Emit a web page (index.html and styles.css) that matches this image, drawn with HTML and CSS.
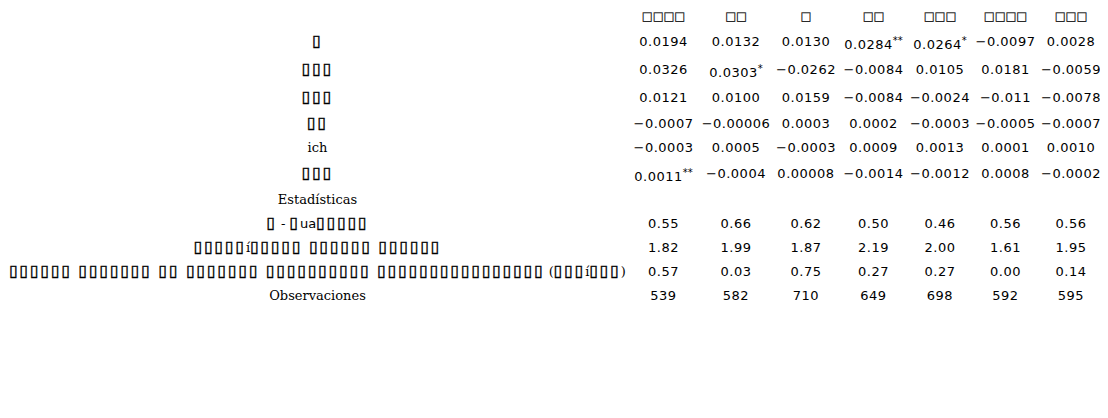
FILE: index.html
```html
<!DOCTYPE html>
<html>
<head>
<meta charset="utf-8">
<link rel="stylesheet" href="styles.css">
</head>
<body>
<table class="results">
  <colgroup>
    <col class="c-label">
    <col class="c1"><col class="c2"><col class="c3"><col class="c4"><col class="c5"><col class="c6"><col class="c7">
  </colgroup>
  <thead>
    <tr class="head">
      <th></th>
      <th>□□□□</th><th>□□</th><th>□</th><th>□□</th><th>□□□</th><th>□□□□</th><th>□□□</th>
    </tr>
  </thead>
  <tbody>
    <tr class="tall">
      <td class="label"><span class="box">▯</span></td>
      <td>0.0194</td><td>0.0132</td><td>0.0130</td><td class="sig">0.0284<sup>**</sup></td><td class="sig">0.0264<sup>*</sup></td><td>−0.0097</td><td>0.0028</td>
    </tr>
    <tr class="tall">
      <td class="label"><span class="box">▯▯▯</span></td>
      <td>0.0326</td><td class="sig">0.0303<sup>*</sup></td><td>−0.0262</td><td>−0.0084</td><td>0.0105</td><td>0.0181</td><td>−0.0059</td>
    </tr>
    <tr class="tall">
      <td class="label"><span class="box">▯▯▯</span></td>
      <td>0.0121</td><td>0.0100</td><td>0.0159</td><td>−0.0084</td><td>−0.0024</td><td>−0.011</td><td>−0.0078</td>
    </tr>
    <tr>
      <td class="label"><span class="box">▯▯</span></td>
      <td>−0.0007</td><td>−0.00006</td><td>0.0003</td><td>0.0002</td><td>−0.0003</td><td>−0.0005</td><td>−0.0007</td>
    </tr>
    <tr>
      <td class="label">ich</td>
      <td>−0.0003</td><td>0.0005</td><td>−0.0003</td><td>0.0009</td><td>0.0013</td><td>0.0001</td><td>0.0010</td>
    </tr>
    <tr class="tall">
      <td class="label"><span class="box">▯▯▯</span></td>
      <td class="sig">0.0011<sup>**</sup></td><td>−0.0004</td><td>0.00008</td><td>−0.0014</td><td>−0.0012</td><td>0.0008</td><td>−0.0002</td>
    </tr>
    <tr>
      <td class="label">Estadísticas</td>
      <td></td><td></td><td></td><td></td><td></td><td></td><td></td>
    </tr>
    <tr>
      <td class="label"><span class="box">▯</span> - <span class="box">▯</span><span class="sans">ua</span><span class="box">▯▯▯▯▯</span></td>
      <td>0.55</td><td>0.66</td><td>0.62</td><td>0.50</td><td>0.46</td><td>0.56</td><td>0.56</td>
    </tr>
    <tr>
      <td class="label"><span class="box">▯▯▯▯▯</span>í<span class="box">▯▯▯▯▯ ▯▯▯▯▯▯ ▯▯▯▯▯▯</span></td>
      <td>1.82</td><td>1.99</td><td>1.87</td><td>2.19</td><td>2.00</td><td>1.61</td><td>1.95</td>
    </tr>
    <tr>
      <td class="label"><span class="box">▯▯▯▯▯▯ ▯▯▯▯▯▯▯ ▯▯ ▯▯▯▯▯▯▯ ▯▯▯▯▯▯▯▯▯▯ ▯▯▯▯▯▯▯▯▯▯▯▯▯▯▯▯</span> (<span class="box">▯▯▯</span>í<span class="box">▯▯▯</span>)</td>
      <td>0.57</td><td>0.03</td><td>0.75</td><td>0.27</td><td>0.27</td><td>0.00</td><td>0.14</td>
    </tr>
    <tr>
      <td class="label">Observaciones</td>
      <td>539</td><td>582</td><td>710</td><td>649</td><td>698</td><td>592</td><td>595</td>
    </tr>
  </tbody>
</table>
</body>
</html>
```

FILE: styles.css
```css
html, body {
  background: #ffffff;
}
body {
  margin: 4px 8px 8px 8px;
  color: #000000;
  font-family: "DejaVu Sans", sans-serif;
  font-size: 13px;
}
.results {
  border-collapse: collapse;
  border-spacing: 0;
  table-layout: fixed;
  width: 1096px;
}
.c-label { width: 619px; }
.c1 { width: 73px; }
.c2 { width: 72px; }
.c3 { width: 68px; }
.c4 { width: 67px; }
.c5 { width: 66px; }
.c6 { width: 65px; }
.c7 { width: 66px; }

.results th,
.results td {
  padding: 4px 0;
  line-height: 16px;
  text-align: center;
  vertical-align: middle;
  white-space: nowrap;
  font-weight: normal;
  letter-spacing: 0.5px;
}
.results th {
  font-size: 11.5px;
  letter-spacing: 0;
  -webkit-text-stroke: 0.2px #000000;
}
.results tr.tall td {
  height: 20px;
}
.results td.sig {
  vertical-align: bottom;
  padding-bottom: 3px;
}
.results sup {
  font-size: 10px;
  line-height: 8px;
  letter-spacing: 0;
  vertical-align: 5px;
}
.results td.label {
  font-family: "DejaVu Serif", serif;
  font-size: 13px;
  letter-spacing: 0;
}
.results .box {
  font-family: "DejaVu Sans", sans-serif;
  font-size: 16px;
  line-height: 0;
  letter-spacing: 1.65px;
  -webkit-text-stroke: 0.4px #000000;
}
.results .sans {
  font-family: "DejaVu Sans", sans-serif;
}
```
